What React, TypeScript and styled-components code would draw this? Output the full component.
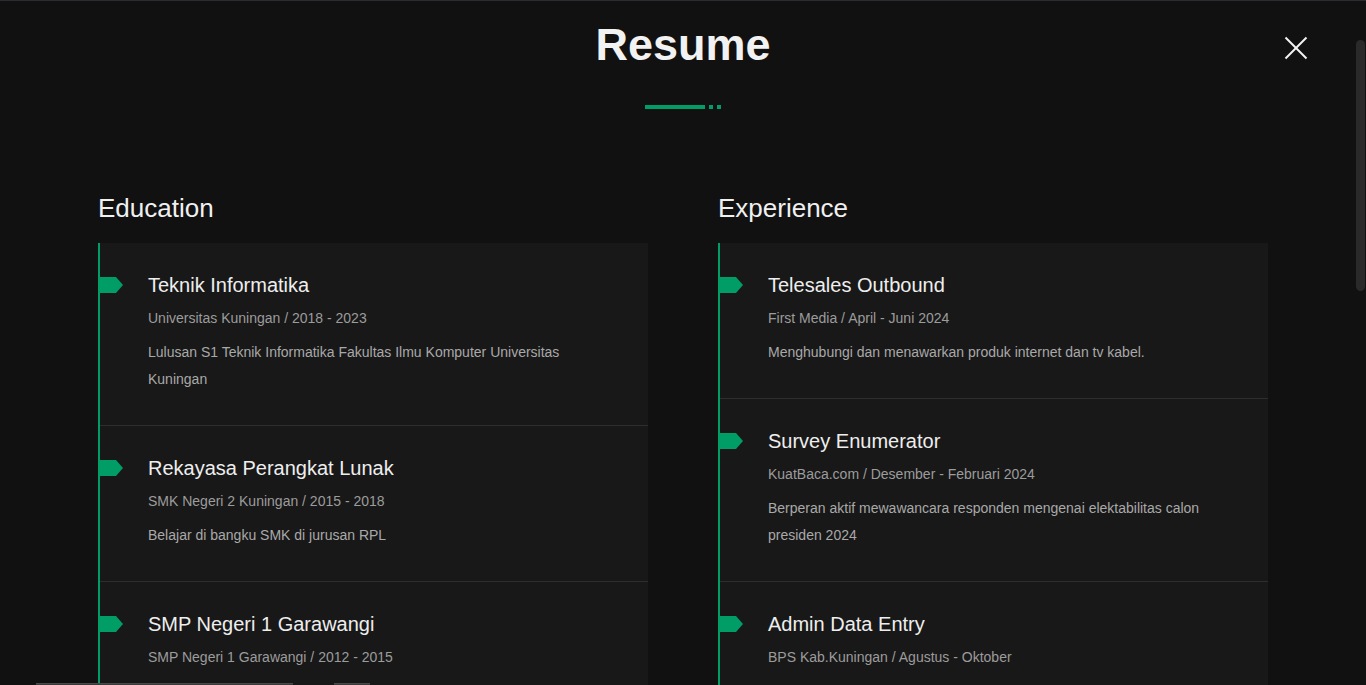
import React from "react";
import styled, { createGlobalStyle } from "styled-components";

const GlobalStyle = createGlobalStyle`
  html, body {
    margin: 0;
    padding: 0;
    background: #111111;
    overflow: hidden;
  }
  body {
    font-family: "Liberation Sans", Arial, sans-serif;
    color: #eeeeee;
  }
  * { box-sizing: border-box; }
`;

const GREEN = "#009e66";

const Page = styled.div`
  position: relative;
  min-height: 100vh;
  background: #111111;
  border-top: 1px solid #2c2a33;
`;

const Header = styled.header`
  display: flex;
  flex-direction: column;
  align-items: center;
  padding-top: 17px;
`;

const Title = styled.h1`
  margin: 0;
  font-size: 45px;
  line-height: 54px;
  font-weight: 700;
  color: #f2f2f2;
`;

const Divider = styled.div`
  display: flex;
  gap: 4px;
  margin-top: 33px;
  height: 4px;
`;

const DividerPart = styled.span<{ $w: number }>`
  display: block;
  width: ${(p) => p.$w}px;
  height: 4px;
  background: ${GREEN};
`;

const CloseButton = styled.button`
  position: absolute;
  top: 35px;
  right: 58px;
  width: 24px;
  height: 24px;
  padding: 0;
  border: 0;
  background: transparent;
  cursor: pointer;
  display: flex;
  align-items: center;
  justify-content: center;
`;

const Columns = styled.main`
  width: 1170px;
  margin: 83px auto 0;
  display: grid;
  grid-template-columns: 550px 550px;
  column-gap: 70px;
`;

const Column = styled.section`
  display: flex;
  flex-direction: column;
`;

const ColumnTitle = styled.h2`
  margin: 0 0 19px;
  font-size: 26px;
  line-height: 32px;
  font-weight: 400;
  color: #f0f0f0;
`;

const Card = styled.div`
  background: #181818;
  border-left: 2px solid ${GREEN};
`;

const Item = styled.article`
  position: relative;
  padding: 30px 30px 32px 48px;
  & + & {
    border-top: 1px solid #2e2e2e;
  }
`;

const Marker = styled.span`
  position: absolute;
  left: -1px;
  top: 34px;
  width: 24px;
  height: 16px;
  background: ${GREEN};
  clip-path: polygon(0 0, 17px 0, 24px 50%, 17px 100%, 0 100%);
`;

const ItemTitle = styled.h3`
  margin: 0;
  font-size: 20px;
  line-height: 24px;
  font-weight: 400;
  color: #eeeeee;
`;

const ItemMeta = styled.div`
  margin-top: 9px;
  font-size: 14px;
  line-height: 24px;
  color: #9c9c9c;
`;

const ItemText = styled.p`
  margin: 9px 0 0;
  font-size: 14px;
  line-height: 27px;
  color: #a9a9a9;
`;

const ScrollThumb = styled.div`
  position: fixed;
  top: 40px;
  right: 1px;
  width: 9px;
  height: 251px;
  border-radius: 5px;
  background: #2a2a2a;
`;

const BottomBar = styled.div<{ $left: number; $w: number }>`
  position: fixed;
  bottom: 0;
  left: ${(p) => p.$left}px;
  width: ${(p) => p.$w}px;
  height: 2px;
  background: #3a3a3a;
  border-top: 1px solid #4a4a4a;
`;

type Entry = { title: string; meta: string; text: string };

const education: Entry[] = [
  {
    title: "Teknik Informatika",
    meta: "Universitas Kuningan / 2018 - 2023",
    text: "Lulusan S1 Teknik Informatika Fakultas Ilmu Komputer Universitas Kuningan",
  },
  {
    title: "Rekayasa Perangkat Lunak",
    meta: "SMK Negeri 2 Kuningan / 2015 - 2018",
    text: "Belajar di bangku SMK di jurusan RPL",
  },
  {
    title: "SMP Negeri 1 Garawangi",
    meta: "SMP Negeri 1 Garawangi / 2012 - 2015",
    text: "Belajar di bangku SMP Negeri 1 Garawangi",
  },
];

const experience: Entry[] = [
  {
    title: "Telesales Outbound",
    meta: "First Media / April - Juni 2024",
    text: "Menghubungi dan menawarkan produk internet dan tv kabel.",
  },
  {
    title: "Survey Enumerator",
    meta: "KuatBaca.com / Desember - Februari 2024",
    text: "Berperan aktif mewawancara responden mengenai elektabilitas calon presiden 2024",
  },
  {
    title: "Admin Data Entry",
    meta: "BPS Kab.Kuningan / Agustus - Oktober",
    text: "Menginput data hasil survei ke dalam sistem",
  },
];

const Timeline = ({ heading, entries }: { heading: string; entries: Entry[] }) => (
  <Column>
    <ColumnTitle>{heading}</ColumnTitle>
    <Card>
      {entries.map((e) => (
        <Item key={e.title}>
          <Marker />
          <ItemTitle>{e.title}</ItemTitle>
          <ItemMeta>{e.meta}</ItemMeta>
          <ItemText>{e.text}</ItemText>
        </Item>
      ))}
    </Card>
  </Column>
);

export default function App() {
  return (
    <>
      <GlobalStyle />
      <Page>
        <Header>
          <Title>Resume</Title>
          <Divider>
            <DividerPart $w={60} />
            <DividerPart $w={4} />
            <DividerPart $w={4} />
          </Divider>
        </Header>
        <CloseButton aria-label="Close">
          <svg width="24" height="24" viewBox="0 0 24 24">
            <line x1="1.5" y1="1.5" x2="22.5" y2="22.5" stroke="#f4f4f4" strokeWidth="2" />
            <line x1="22.5" y1="1.5" x2="1.5" y2="22.5" stroke="#f4f4f4" strokeWidth="2" />
          </svg>
        </CloseButton>
        <Columns>
          <Timeline heading="Education" entries={education} />
          <Timeline heading="Experience" entries={experience} />
        </Columns>
        <ScrollThumb />
        <BottomBar $left={36} $w={257} />
        <BottomBar $left={334} $w={36} />
      </Page>
    </>
  );
}
